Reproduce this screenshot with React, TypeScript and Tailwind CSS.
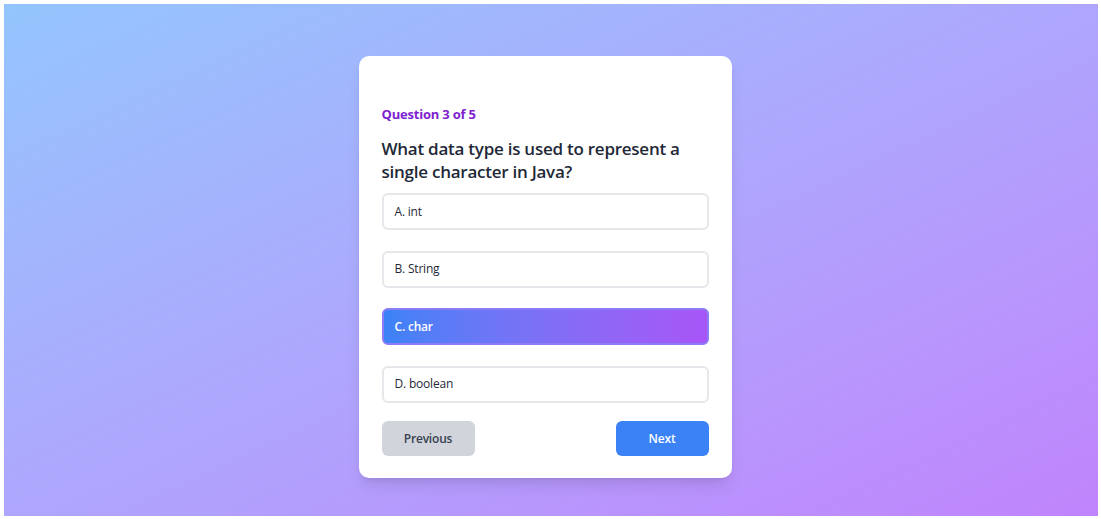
import { useState } from "react";

const OPTIONS = ["A. int", "B. String", "C. char", "D. boolean"];

export default function App() {
  const [selected, setSelected] = useState(2);

  return (
    <div
      className="w-[1101px] h-[519px] bg-white pt-[4px] pl-[4px] pr-[3px] pb-[3px]"
      style={{ fontFamily: "'Segoe UI', 'Open Sans', sans-serif" }}
    >
      <div className="h-full w-full bg-gradient-to-br from-[#93c5fd] to-[#c084fc] flex justify-center pt-[52px]">
        <div className="w-[373px] h-[422px] mr-[12px] bg-white rounded-[10px] shadow-lg px-[23px] pt-[48px] pb-[22px] flex flex-col">
          <div className="text-[13px] leading-[20px] font-bold tracking-[-0.2px] text-[#7e22ce]">Question 3 of 5</div>
          <h2 className="mt-[13px] text-[17px] leading-[23px] font-semibold tracking-[-0.25px] text-[#1f2937]">
            What data type is used to represent a single character in Java?
          </h2>
          <div className="mt-[10px] flex flex-col gap-[20.5px]">
            {OPTIONS.map((opt, i) =>
              i === selected ? (
                <button
                  key={opt}
                  onClick={() => setSelected(i)}
                  className="h-[37px] w-full rounded-[6px] border-2 border-[#8b7cf6] bg-gradient-to-r from-[#3b82f6] to-[#a855f7] px-[11px] text-left text-[12px] tracking-[-0.2px] font-semibold text-white"
                >
                  {opt}
                </button>
              ) : (
                <button
                  key={opt}
                  onClick={() => setSelected(i)}
                  className="h-[37px] w-full rounded-[6px] border-2 border-[#e5e7eb] bg-white px-[11px] text-left text-[12px] tracking-[-0.2px] text-[#1f2937]"
                >
                  {opt}
                </button>
              )
            )}
          </div>
          <div className="mt-auto flex justify-between">
            <button className="w-[93px] h-[35px] rounded-[6px] bg-[#d1d5db] text-[12px] tracking-[-0.2px] font-semibold text-[#374151]">
              Previous
            </button>
            <button className="w-[93px] h-[35px] rounded-[6px] bg-[#3b82f6] text-[12px] tracking-[-0.2px] font-semibold text-white">
              Next
            </button>
          </div>
        </div>
      </div>
    </div>
  );
}
